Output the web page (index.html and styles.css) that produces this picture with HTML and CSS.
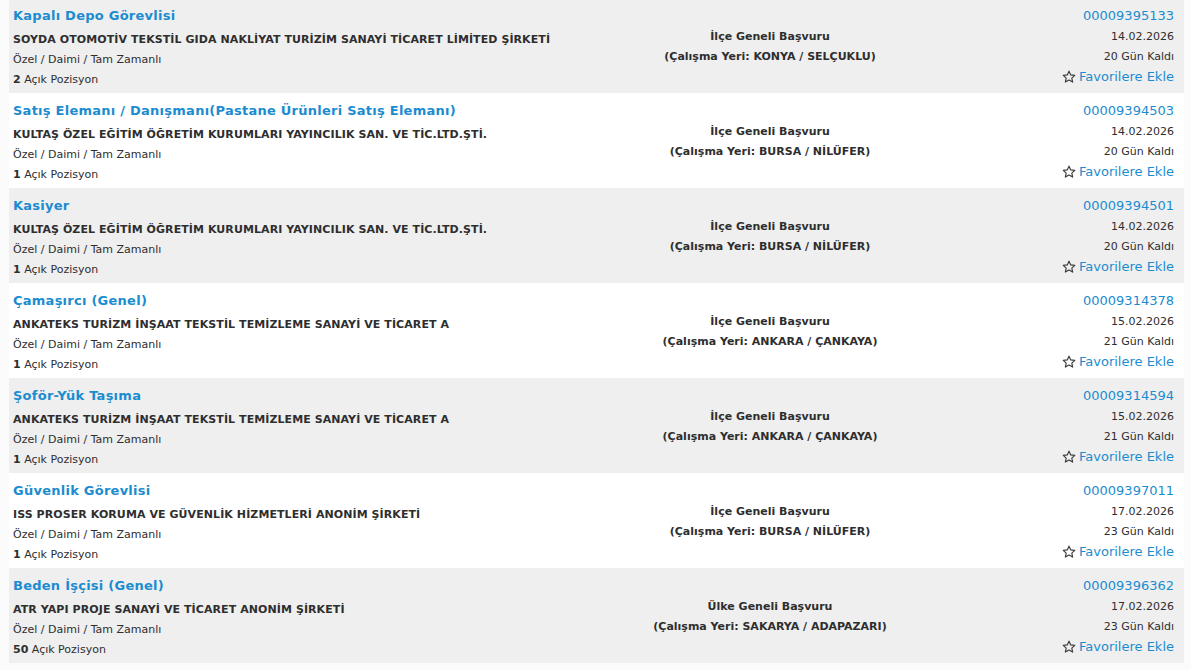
FILE: index.html
```html
<!DOCTYPE html>
<html lang="tr">
<head>
<meta charset="utf-8">
<title>İlanlar</title>
<link rel="stylesheet" href="styles.css">
</head>
<body>
<div class="list">

  <div class="row gray">
    <div class="col-left">
      <a class="title" href="#">Kapalı Depo Görevlisi</a>
      <div class="company">SOYDA OTOMOTİV TEKSTİL GIDA NAKLİYAT TURİZİM SANAYİ TİCARET LİMİTED ŞİRKETİ</div>
      <div class="meta">Özel / Daimi / Tam Zamanlı</div>
      <div class="meta"><b>2</b> Açık Pozisyon</div>
    </div>
    <div class="col-mid">
      <div>İlçe Geneli Başvuru</div>
      <div>(Çalışma Yeri: KONYA / SELÇUKLU)</div>
    </div>
    <div class="col-right">
      <a class="num" href="#">00009395133</a>
      <div class="meta">14.02.2026</div>
      <div class="meta">20 Gün Kaldı</div>
      <a class="fav" href="#"><svg class="star" viewBox="0 0 16 16" width="14" height="14"><path d="M8 1.3l2 4.3 4.6.5-3.4 3.1 1 4.6L8 11.5l-4.2 2.3 1-4.6L1.4 6.1 6 5.6z"/></svg>Favorilere Ekle</a>
    </div>
  </div>

  <div class="row">
    <div class="col-left">
      <a class="title" href="#">Satış Elemanı / Danışmanı(Pastane Ürünleri Satış Elemanı)</a>
      <div class="company">KULTAŞ ÖZEL EĞİTİM ÖĞRETİM KURUMLARI YAYINCILIK SAN. VE TİC.LTD.ŞTİ.</div>
      <div class="meta">Özel / Daimi / Tam Zamanlı</div>
      <div class="meta"><b>1</b> Açık Pozisyon</div>
    </div>
    <div class="col-mid">
      <div>İlçe Geneli Başvuru</div>
      <div>(Çalışma Yeri: BURSA / NİLÜFER)</div>
    </div>
    <div class="col-right">
      <a class="num" href="#">00009394503</a>
      <div class="meta">14.02.2026</div>
      <div class="meta">20 Gün Kaldı</div>
      <a class="fav" href="#"><svg class="star" viewBox="0 0 16 16" width="14" height="14"><path d="M8 1.3l2 4.3 4.6.5-3.4 3.1 1 4.6L8 11.5l-4.2 2.3 1-4.6L1.4 6.1 6 5.6z"/></svg>Favorilere Ekle</a>
    </div>
  </div>

  <div class="row gray">
    <div class="col-left">
      <a class="title" href="#">Kasiyer</a>
      <div class="company">KULTAŞ ÖZEL EĞİTİM ÖĞRETİM KURUMLARI YAYINCILIK SAN. VE TİC.LTD.ŞTİ.</div>
      <div class="meta">Özel / Daimi / Tam Zamanlı</div>
      <div class="meta"><b>1</b> Açık Pozisyon</div>
    </div>
    <div class="col-mid">
      <div>İlçe Geneli Başvuru</div>
      <div>(Çalışma Yeri: BURSA / NİLÜFER)</div>
    </div>
    <div class="col-right">
      <a class="num" href="#">00009394501</a>
      <div class="meta">14.02.2026</div>
      <div class="meta">20 Gün Kaldı</div>
      <a class="fav" href="#"><svg class="star" viewBox="0 0 16 16" width="14" height="14"><path d="M8 1.3l2 4.3 4.6.5-3.4 3.1 1 4.6L8 11.5l-4.2 2.3 1-4.6L1.4 6.1 6 5.6z"/></svg>Favorilere Ekle</a>
    </div>
  </div>

  <div class="row">
    <div class="col-left">
      <a class="title" href="#">Çamaşırcı (Genel)</a>
      <div class="company">ANKATEKS TURİZM İNŞAAT TEKSTİL TEMİZLEME SANAYİ VE TİCARET A</div>
      <div class="meta">Özel / Daimi / Tam Zamanlı</div>
      <div class="meta"><b>1</b> Açık Pozisyon</div>
    </div>
    <div class="col-mid">
      <div>İlçe Geneli Başvuru</div>
      <div>(Çalışma Yeri: ANKARA / ÇANKAYA)</div>
    </div>
    <div class="col-right">
      <a class="num" href="#">00009314378</a>
      <div class="meta">15.02.2026</div>
      <div class="meta">21 Gün Kaldı</div>
      <a class="fav" href="#"><svg class="star" viewBox="0 0 16 16" width="14" height="14"><path d="M8 1.3l2 4.3 4.6.5-3.4 3.1 1 4.6L8 11.5l-4.2 2.3 1-4.6L1.4 6.1 6 5.6z"/></svg>Favorilere Ekle</a>
    </div>
  </div>

  <div class="row gray">
    <div class="col-left">
      <a class="title" href="#">Şoför-Yük Taşıma</a>
      <div class="company">ANKATEKS TURİZM İNŞAAT TEKSTİL TEMİZLEME SANAYİ VE TİCARET A</div>
      <div class="meta">Özel / Daimi / Tam Zamanlı</div>
      <div class="meta"><b>1</b> Açık Pozisyon</div>
    </div>
    <div class="col-mid">
      <div>İlçe Geneli Başvuru</div>
      <div>(Çalışma Yeri: ANKARA / ÇANKAYA)</div>
    </div>
    <div class="col-right">
      <a class="num" href="#">00009314594</a>
      <div class="meta">15.02.2026</div>
      <div class="meta">21 Gün Kaldı</div>
      <a class="fav" href="#"><svg class="star" viewBox="0 0 16 16" width="14" height="14"><path d="M8 1.3l2 4.3 4.6.5-3.4 3.1 1 4.6L8 11.5l-4.2 2.3 1-4.6L1.4 6.1 6 5.6z"/></svg>Favorilere Ekle</a>
    </div>
  </div>

  <div class="row">
    <div class="col-left">
      <a class="title" href="#">Güvenlik Görevlisi</a>
      <div class="company">ISS PROSER KORUMA VE GÜVENLİK HİZMETLERİ ANONİM ŞİRKETİ</div>
      <div class="meta">Özel / Daimi / Tam Zamanlı</div>
      <div class="meta"><b>1</b> Açık Pozisyon</div>
    </div>
    <div class="col-mid">
      <div>İlçe Geneli Başvuru</div>
      <div>(Çalışma Yeri: BURSA / NİLÜFER)</div>
    </div>
    <div class="col-right">
      <a class="num" href="#">00009397011</a>
      <div class="meta">17.02.2026</div>
      <div class="meta">23 Gün Kaldı</div>
      <a class="fav" href="#"><svg class="star" viewBox="0 0 16 16" width="14" height="14"><path d="M8 1.3l2 4.3 4.6.5-3.4 3.1 1 4.6L8 11.5l-4.2 2.3 1-4.6L1.4 6.1 6 5.6z"/></svg>Favorilere Ekle</a>
    </div>
  </div>

  <div class="row gray">
    <div class="col-left">
      <a class="title" href="#">Beden İşçisi (Genel)</a>
      <div class="company">ATR YAPI PROJE SANAYİ VE TİCARET ANONİM ŞİRKETİ</div>
      <div class="meta">Özel / Daimi / Tam Zamanlı</div>
      <div class="meta"><b>50</b> Açık Pozisyon</div>
    </div>
    <div class="col-mid">
      <div>Ülke Geneli Başvuru</div>
      <div>(Çalışma Yeri: SAKARYA / ADAPAZARI)</div>
    </div>
    <div class="col-right">
      <a class="num" href="#">00009396362</a>
      <div class="meta">17.02.2026</div>
      <div class="meta">23 Gün Kaldı</div>
      <a class="fav" href="#"><svg class="star" viewBox="0 0 16 16" width="14" height="14"><path d="M8 1.3l2 4.3 4.6.5-3.4 3.1 1 4.6L8 11.5l-4.2 2.3 1-4.6L1.4 6.1 6 5.6z"/></svg>Favorilere Ekle</a>
    </div>
  </div>

</div>
</body>
</html>
```
FILE: styles.css
```css
html, body {
  margin: 0;
  padding: 0;
}
body {
  background: #fbfbfb;
  font-family: "DejaVu Sans", Verdana, sans-serif;
  color: #2e2e2e;
  overflow: hidden;
}
a {
  text-decoration: none;
}
.list {
  margin: -2px 7px 0 9px;
}
.row {
  display: grid;
  grid-template-columns: 607px 300px 1fr;
  height: 95px;
  box-sizing: border-box;
  padding: 7px 10px 0 4px;
  background: #fff;
}
.row.gray {
  background: #efefef;
}
.col-left {
  display: flex;
  flex-direction: column;
}
.title {
  color: #1b8cd0;
  font-weight: bold;
  font-size: 13px;
  letter-spacing: 0.25px;
  line-height: 22px;
  margin-bottom: 3px;
}
.company {
  font-weight: bold;
  font-size: 11px;
  letter-spacing: 0.08px;
  line-height: 20px;
}
.meta {
  font-size: 11px;
  line-height: 20px;
}
.meta b {
  font-weight: bold;
}
.col-mid {
  padding-top: 22px;
  text-align: center;
  font-weight: bold;
  font-size: 11px;
  line-height: 20px;
}
.col-right {
  display: flex;
  flex-direction: column;
  align-items: flex-end;
}
.num {
  color: #1b8cd0;
  font-size: 13px;
  line-height: 22px;
}
.fav {
  color: #1b8cd0;
  font-size: 13px;
  line-height: 20px;
  display: flex;
  align-items: center;
  gap: 3px;
}
.star {
  fill: none;
  stroke: #3a3a3a;
  stroke-width: 1.3;
  stroke-linejoin: round;
}
```
